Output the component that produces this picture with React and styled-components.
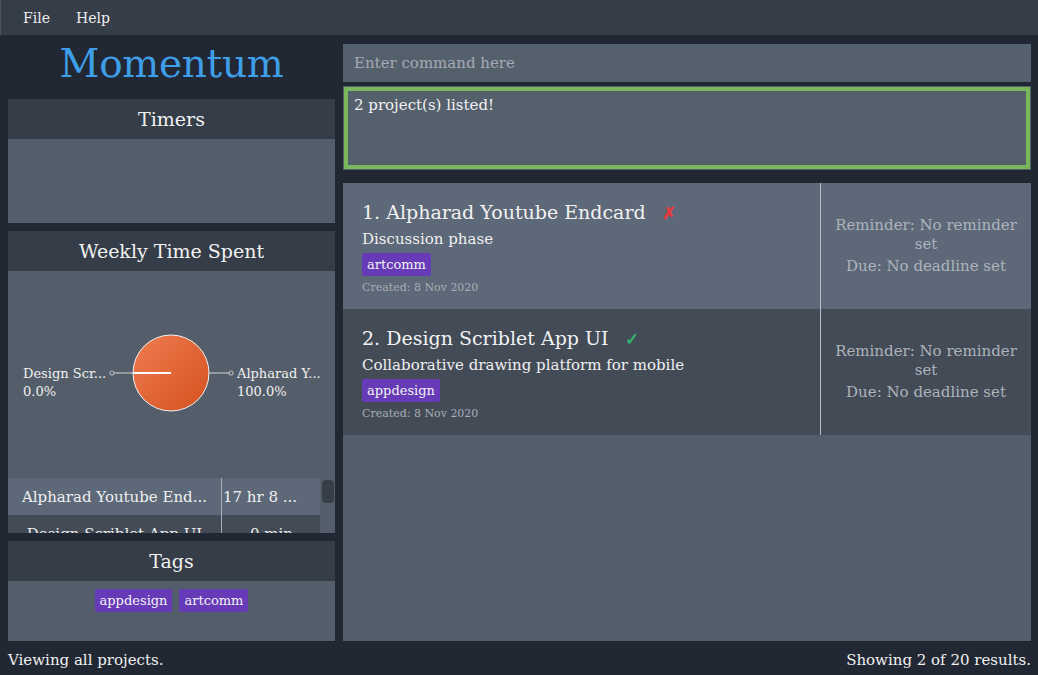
import React from 'react'
import styled, { createGlobalStyle } from 'styled-components'

const GlobalStyle = createGlobalStyle`
    html, body {
        margin: 0;
        padding: 0;
        background: #222833;
    }
    body {
        font-family: "DejaVu Serif", "Liberation Serif", serif;
        color: #f0f0f0;
    }
`

const projects = [
    {
        id: 1,
        name: 'Alpharad Youtube Endcard',
        description: 'Discussion phase',
        tag: 'artcomm',
        done: false,
        created: '8 Nov 2020',
    },
    {
        id: 2,
        name: 'Design Scriblet App UI',
        description: 'Collaborative drawing platform for mobile',
        tag: 'appdesign',
        done: true,
        created: '8 Nov 2020',
    },
]

function PieChart() {
    return (
        <svg width="327" height="207" viewBox="0 0 327 207">
            <defs>
                <linearGradient id="pieFill" x1="0" y1="0" x2="1" y2="1">
                    <stop offset="0" stopColor="#ef7d50" />
                    <stop offset="1" stopColor="#d4501f" />
                </linearGradient>
            </defs>
            <line x1="105" y1="102" x2="126" y2="102" stroke="#a9aeb4" strokeWidth="1.5" />
            <circle cx="104" cy="102" r="2" fill="none" stroke="#a9aeb4" strokeWidth="1.2" />
            <line x1="201" y1="102" x2="222" y2="102" stroke="#a9aeb4" strokeWidth="1.5" />
            <circle cx="223" cy="102" r="2" fill="none" stroke="#a9aeb4" strokeWidth="1.2" />
            <circle cx="163" cy="102" r="38" fill="url(#pieFill)" stroke="#f2f2f2" strokeWidth="1" />
            <line x1="125" y1="102" x2="163" y2="102" stroke="#ffffff" strokeWidth="2" />
            <text x="15" y="107" fill="#f0f0f0" fontSize="13">Design Scr...</text>
            <text x="15" y="125" fill="#f0f0f0" fontSize="13">0.0%</text>
            <text x="229" y="107" fill="#f0f0f0" fontSize="13">Alpharad Y...</text>
            <text x="229" y="125" fill="#f0f0f0" fontSize="13">100.0%</text>
        </svg>
    )
}

function App() {
    return (
        <Window>
            <GlobalStyle />
            <MenuBar>
                <MenuItem>File</MenuItem>
                <MenuItem>Help</MenuItem>
            </MenuBar>
            <Main>
                <Sidebar>
                    <Logo>Momentum</Logo>
                    <Panel>
                        <PanelHeader>Timers</PanelHeader>
                        <PanelBody height="84px" />
                    </Panel>
                    <Panel>
                        <PanelHeader>Weekly Time Spent</PanelHeader>
                        <PanelBody height="262px">
                            <ChartArea>
                                <PieChart />
                            </ChartArea>
                            <TableWrap>
                                <Table>
                                    <TableRow light>
                                        <NameCell>Alpharad Youtube End...</NameCell>
                                        <TimeCell>17 hr 8 ...</TimeCell>
                                    </TableRow>
                                    <TableRow>
                                        <NameCell>Design Scriblet App UI</NameCell>
                                        <TimeCell center>0 min</TimeCell>
                                    </TableRow>
                                </Table>
                                <ScrollTrack>
                                    <ScrollThumb />
                                </ScrollTrack>
                            </TableWrap>
                        </PanelBody>
                    </Panel>
                    <Panel>
                        <PanelHeader>Tags</PanelHeader>
                        <PanelBody height="60px">
                            <TagList>
                                <Tag>appdesign</Tag>
                                <Tag>artcomm</Tag>
                            </TagList>
                        </PanelBody>
                    </Panel>
                </Sidebar>
                <Content>
                    <CommandBox>Enter command here</CommandBox>
                    <ResultBox>
                        <ResultInner>2 project(s) listed!</ResultInner>
                    </ResultBox>
                    <ProjectList>
                        {projects.map((p, i) => (
                            <Card key={p.id} dark={i % 2 === 1}>
                                <CardMain>
                                    <CardTitle>
                                        {p.id}. {p.name}
                                        <Mark done={p.done}>{p.done ? '✓' : '✗'}</Mark>
                                    </CardTitle>
                                    <CardDesc>{p.description}</CardDesc>
                                    <CardTags>
                                        <Tag>{p.tag}</Tag>
                                    </CardTags>
                                    <Created>Created: {p.created}</Created>
                                </CardMain>
                                <CardSide>
                                    <SideLine>Reminder: No reminder set</SideLine>
                                    <SideLine>Due: No deadline set</SideLine>
                                </CardSide>
                            </Card>
                        ))}
                    </ProjectList>
                </Content>
            </Main>
            <StatusBar>
                <span>Viewing all projects.</span>
                <span>Showing 2 of 20 results.</span>
            </StatusBar>
        </Window>
    )
}

export default App

const Window = styled.div`
    width: 1038px;
    height: 675px;
    display: flex;
    flex-direction: column;
    background: #222833;
    overflow: hidden;
`

const MenuBar = styled.div`
    height: 35px;
    flex-shrink: 0;
    display: flex;
    align-items: center;
    padding-left: 22px;
    gap: 26px;
    background: #353d48;
    border-left: 1px solid #4a525d;
    box-sizing: border-box;
`

const MenuItem = styled.span`
    font-size: 14px;
    color: #eeeeee;
`

const Main = styled.div`
    flex: 1;
    display: flex;
    gap: 8px;
    padding: 0 7px 0 8px;
    min-height: 0;
`

const Sidebar = styled.div`
    width: 327px;
    display: flex;
    flex-direction: column;
    gap: 8px;
`

const Logo = styled.div`
    height: 56px;
    display: flex;
    align-items: center;
    justify-content: center;
    font-size: 39px;
    color: #3f9ee8;
    letter-spacing: -0.3px;
`

const Panel = styled.div`
    display: flex;
    flex-direction: column;
`

const PanelHeader = styled.div`
    height: 40px;
    display: flex;
    align-items: center;
    justify-content: center;
    background: #353d48;
    font-size: 19px;
    color: #f2f2f2;
`

const PanelBody = styled.div`
    height: ${props => props.height};
    background: #545e6a;
    display: flex;
    flex-direction: column;
    overflow: hidden;
`

const ChartArea = styled.div`
    height: 207px;
    display: flex;
    justify-content: center;
    align-items: flex-start;
`

const TableWrap = styled.div`
    flex: 1;
    display: flex;
    overflow: hidden;
`

const Table = styled.div`
    flex: 1;
    display: flex;
    flex-direction: column;
`

const TableRow = styled.div`
    height: 37px;
    flex-shrink: 0;
    display: flex;
    background: ${props => (props.light ? '#5d6878' : '#434b57')};
    font-size: 15px;
    color: #f0f0f0;
`

const NameCell = styled.div`
    width: 214px;
    flex-shrink: 0;
    display: flex;
    align-items: center;
    justify-content: center;
    white-space: nowrap;
    overflow: hidden;
    border-right: 1px solid #a9aeb4;
    box-sizing: border-box;
`

const TimeCell = styled.div`
    flex: 1;
    display: flex;
    align-items: center;
    justify-content: ${props => (props.center ? 'center' : 'flex-start')};
    padding-left: 1px;
    white-space: nowrap;
    overflow: hidden;
`

const ScrollTrack = styled.div`
    width: 15px;
    flex-shrink: 0;
    background: #545e6a;
    padding: 2px 1px 0 2px;
    box-sizing: border-box;
`

const ScrollThumb = styled.div`
    height: 23px;
    border-radius: 4px;
    background: #363e49;
`

const TagList = styled.div`
    display: flex;
    justify-content: center;
    gap: 7px;
    padding-top: 8px;
`

const Tag = styled.span`
    display: inline-flex;
    align-items: center;
    height: 23px;
    padding: 0 5px;
    border-radius: 2px;
    background: #673ab7;
    color: #f2f2f2;
    font-size: 13px;
`

const Content = styled.div`
    flex: 1;
    display: flex;
    flex-direction: column;
    padding-top: 9px;
`

const CommandBox = styled.div`
    height: 38px;
    display: flex;
    align-items: center;
    padding-left: 11px;
    background: #55606d;
    color: #a4aab2;
    font-size: 15px;
`

const ResultBox = styled.div`
    margin-top: 4px;
    height: 84px;
    padding: 1px;
    background: #55606d;
    box-sizing: border-box;
`

const ResultInner = styled.div`
    height: 100%;
    border: 4px solid #78b85a;
    box-sizing: border-box;
    padding: 5px 0 0 6px;
    font-size: 15px;
    color: #f2f2f2;
`

const ProjectList = styled.div`
    margin-top: 13px;
    flex: 1;
    background: #545e6a;
    display: flex;
    flex-direction: column;
`

const Card = styled.div`
    height: 126px;
    display: flex;
    background: ${props => (props.dark ? '#434b57' : '#5d6878')};
`

const CardMain = styled.div`
    width: 478px;
    padding: 17px 0 0 19px;
    box-sizing: border-box;
    border-right: 1px solid #b9bec4;
    display: flex;
    flex-direction: column;
`

const CardTitle = styled.div`
    font-size: 19px;
    color: #f2f2f2;
    line-height: 24px;
    white-space: nowrap;
`

const Mark = styled.span`
    margin-left: 16px;
    font-size: 17px;
    font-weight: bold;
    color: ${props => (props.done ? '#2fb36b' : '#e5393a')};
`

const CardDesc = styled.div`
    margin-top: 5px;
    font-size: 15px;
    line-height: 18px;
    color: #f0f0f0;
`

const CardTags = styled.div`
    margin-top: 5px;
    display: flex;
`

const Created = styled.div`
    margin-top: 5px;
    font-size: 11px;
    line-height: 14px;
    color: #a8adb4;
`

const CardSide = styled.div`
    flex: 1;
    display: flex;
    flex-direction: column;
    justify-content: center;
    align-items: center;
    gap: 3px;
    padding: 0 6px;
    text-align: center;
    font-size: 15px;
    line-height: 19px;
    color: #aeb4bc;
`

const SideLine = styled.div``

const StatusBar = styled.div`
    height: 34px;
    flex-shrink: 0;
    display: flex;
    align-items: center;
    justify-content: space-between;
    padding: 4px 7px 0 8px;
    box-sizing: border-box;
    font-size: 15px;
    color: #f0f0f0;
`
